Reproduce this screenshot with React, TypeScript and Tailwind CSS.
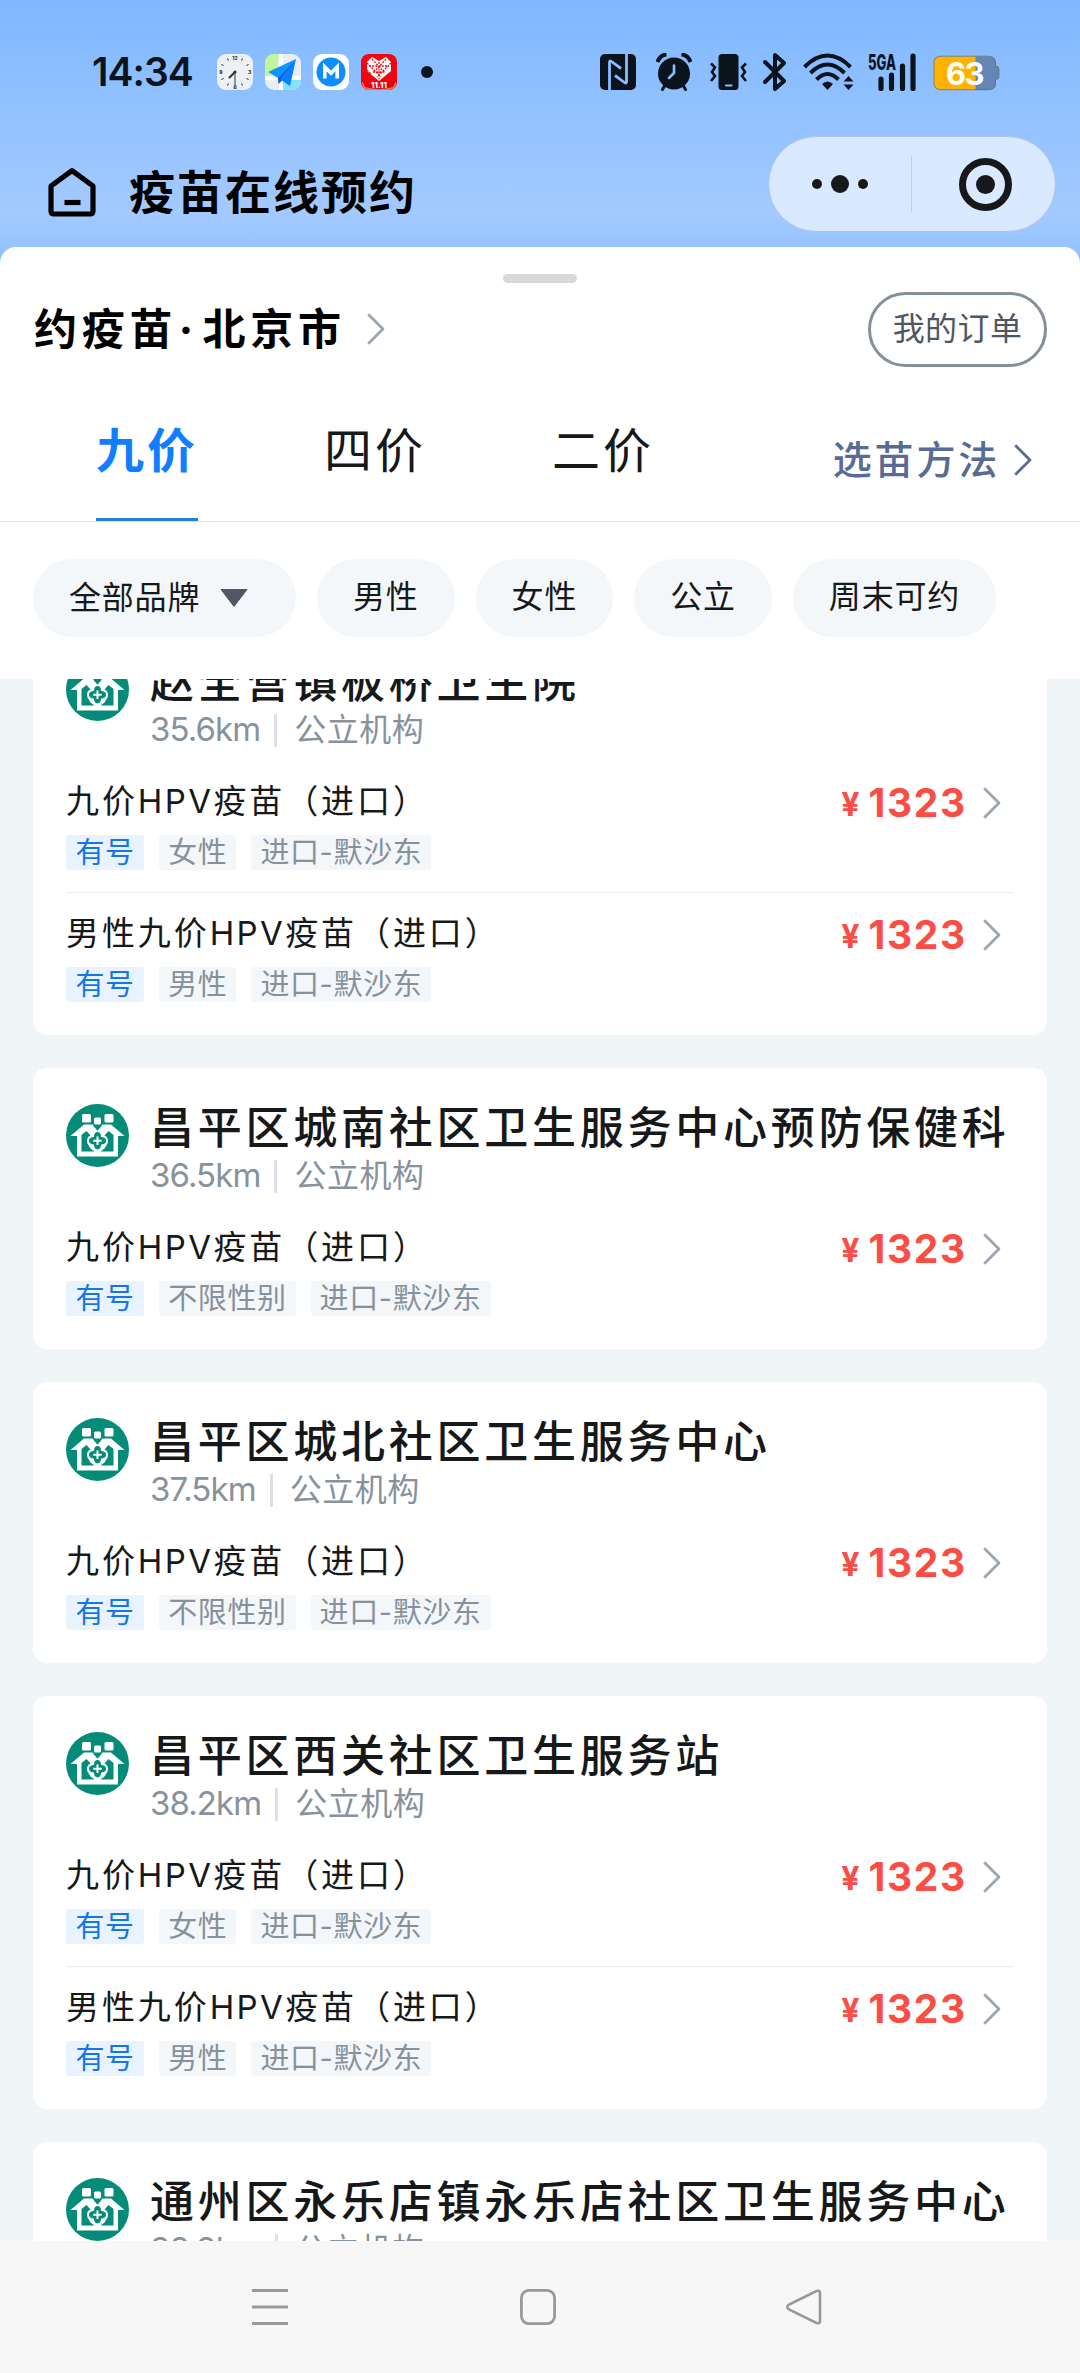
import React from 'react';

interface Vaccine {
  name: React.ReactNode;
  tags: string[];
}

interface Clinic {
  name: string;
  distance: string;
  vaccines: Vaccine[];
}

const NineValent = (
  <>
    九价<span className="tracking-[2.4px]">HPV</span>疫苗（进口）
  </>
);

const FEMALE: Vaccine = { name: NineValent, tags: ['女性', '进口-默沙东'] };
const MALE: Vaccine = { name: <>男性{NineValent}</>, tags: ['男性', '进口-默沙东'] };
const ANYONE: Vaccine = { name: NineValent, tags: ['不限性别', '进口-默沙东'] };

const CLINICS: Clinic[] = [
  { name: '赵全营镇板桥卫生院', distance: '35.6km', vaccines: [FEMALE, MALE] },
  { name: '昌平区城南社区卫生服务中心预防保健科', distance: '36.5km', vaccines: [ANYONE] },
  { name: '昌平区城北社区卫生服务中心', distance: '37.5km', vaccines: [ANYONE] },
  { name: '昌平区西关社区卫生服务站', distance: '38.2km', vaccines: [FEMALE, MALE] },
  { name: '通州区永乐店镇永乐店社区卫生服务中心', distance: '38.8km', vaccines: [ANYONE] },
];

const Chevron: React.FC<{ className: string }> = ({ className }) => (
  <svg viewBox="0 0 18 32" fill="none" stroke="currentColor" strokeWidth="2.8" className={`h-8 w-[18px] shrink-0 ${className}`}>
    <path d="M1.2 1.2 16 16 1.2 30.8" strokeLinejoin="round" />
  </svg>
);

const StatusBar = () => (
  <div className="flex h-[136px] items-start pt-[53px] text-[#0b131c]">
    <div className="ml-[92px] w-[125px] text-[39px] leading-[38px] font-semibold tracking-[-1px]">14:34</div>
    <div className="flex gap-3 pt-px">
      <svg viewBox="0 0 36 36" className="h-9 w-9">
        <rect width="36" height="36" rx="9" fill="#eef1f4" />
        <path
          d="M10.5 4.5l1 2M25.5 4.5l-1 2M4.5 10.5l2 1M31.5 10.5l-2 1M4.5 25.5l2-1M31.5 25.5l-2-1M10.5 31.5l1-2M25.5 31.5l-1-2"
          stroke="#222"
          strokeWidth="1"
        />
        <g fill="#111" fontSize="5" fontWeight="700" textAnchor="middle">
          <text x="18" y="5.8">12</text>
          <text x="32.5" y="20">3</text>
          <text x="18" y="34.8">6</text>
          <text x="3.8" y="20">9</text>
        </g>
        <path d="M18 18l-5.5 5.5" stroke="#26303c" strokeWidth="2" strokeLinecap="round" />
        <path d="M18 18v14" stroke="#6b7480" strokeWidth="1.5" />
        <circle cx="18" cy="18" r="1.5" fill="#26303c" />
      </svg>
      <svg viewBox="0 0 36 36" className="h-9 w-9">
        <defs>
          <clipPath id="map-tile">
            <rect width="36" height="36" rx="9" />
          </clipPath>
        </defs>
        <g clipPath="url(#map-tile)">
          <rect width="36" height="36" fill="#e6eff5" />
          <path d="M0 0h14L12 18 0 26z" fill="#c0f79a" />
          <path d="M18 26h18v10H18z" fill="#83e3ff" />
          <path d="M14 0h4v36h-4zM0 22h36v4H0z" fill="#fff" />
          <path d="M31 5 3 18l10 6z" fill="#0a95ff" />
          <path d="M31 5 13 24l.5 6 4-4z" fill="#0556d8" />
          <path d="M31 5 15 25l10 7z" fill="#0c7dff" />
        </g>
      </svg>
      <svg viewBox="0 0 36 36" className="h-9 w-9">
        <rect width="36" height="36" rx="9" fill="#fff" />
        <circle cx="18" cy="18" r="14.5" fill="#0d8ffb" />
        <path d="M11.800 24.500V13l6.200 6.300 6.200-6.300v11.500" fill="none" stroke="#fff" strokeWidth="3.6" />
      </svg>
      <svg viewBox="0 0 36 36" className="h-9 w-9">
        <rect width="36" height="36" rx="8" fill="#ee0713" />
        <path d="M1 28q17 10 34 0v2q-1 6-8 6H9q-7 0-8-6z" fill="#ff6d3f" />
        <path d="M1 26q17 12 34 0l-3 7q-14 4-28 0z" fill="#d90410" />
        <path d="M18 27 6 17V8l5-5 7 4 7-4 5 5v9z" fill="#fff" />
        <path
          d="M6 9l14 14M11 5l13 14M6 16l4 4M30 9 16 23M25 5 12 19M18 8v17M8 12h20M12 18h12"
          stroke="#ee0713"
          strokeWidth="1.3"
          fill="none"
          strokeDasharray="2 1.2"
        />
        <text x="18" y="34" fill="#fff" fontSize="8" fontWeight="800" textAnchor="middle" textLength="16" lengthAdjust="spacingAndGlyphs">11.11</text>
      </svg>
    </div>
    <div className="mt-[13px] ml-6 h-3 w-3 rounded-full bg-[#0b131c]" />

    <svg viewBox="0 0 36 36" className="mt-px ml-[167px] h-9 w-9">
      <rect width="36" height="36" rx="5" fill="currentColor" />
      <path d="M9.500 36V8.500q0-2.500 2-1L21 14.500M26.500 0v27.500q0 2.500-2 1L15 21.500" fill="none" stroke="#8abcff" strokeWidth="2.8" />
    </svg>
    <svg viewBox="0 0 36 38" className="ml-5 h-[38px] w-9">
      <circle cx="18" cy="20.5" r="16" fill="currentColor" />
      <path d="M1.500 9Q4 2 10.500 1.500M34.500 9Q32 2 25.500 1.500" stroke="currentColor" strokeWidth="4" fill="none" />
      <path d="M8.500 33 6.500 36.500M27.500 33l2 3.500" stroke="currentColor" strokeWidth="3" strokeLinecap="round" />
      <path d="M18 12.500V20l-5 5" stroke="#8abcff" strokeWidth="2.6" fill="none" strokeLinecap="round" />
    </svg>
    <svg viewBox="0 0 37 36" className="mt-px ml-[18px] h-9 w-[37px]">
      <rect x="8.5" width="20" height="36" rx="3.5" fill="currentColor" />
      <path d="M16 31.500h5.500" stroke="#8abcff" strokeWidth="2.2" strokeLinecap="round" />
      <path d="m1 9.500 4 4-3 4.500 3 4-4 5M36 9.500l-4 4 3 4.500-3 4 4 5" fill="none" stroke="currentColor" strokeWidth="2.6" />
    </svg>
    <svg viewBox="0 0 24 38" className="ml-4 h-[38px] w-6">
      <path d="m2 9 19 19-9 8V2l9 8L2 29" fill="none" stroke="currentColor" strokeWidth="4" strokeLinejoin="round" strokeLinecap="round" />
    </svg>
    <svg viewBox="0 0 52 38" className="ml-4 h-[38px] w-[52px]">
      <g fill="none" stroke="currentColor" strokeWidth="4">
        <path d="M1.500 14q23-23 46 0" />
        <path d="M7.500 20q17-17 34 0" />
        <path d="M13.500 26.500q11-11 22 0" />
      </g>
      <path d="M19 31q5.500-5 11 0l-5.500 6z" fill="currentColor" />
      <path d="M40.500 28.500 45.500 23l5 5.500zM40.500 31.500l5 5.500 5-5.500z" fill="currentColor" />
    </svg>
    <svg viewBox="0 0 48 38" className="ml-[13px] h-[38px] w-12 overflow-visible">
      <text x="0" y="17" fill="currentColor" fontSize="21" fontWeight="800" textLength="28" lengthAdjust="spacingAndGlyphs">5GA</text>
      <path d="M13 26v9.500M23.500 22v13.500M34.500 13v22.500M45 3v32.500" stroke="currentColor" strokeWidth="5.2" strokeLinecap="round" />
    </svg>
    <svg viewBox="0 0 67 36" className="mt-[2px] ml-[17px] h-9 w-[67px]">
      <path d="M42 1.500h14q7 0 7 7v2.500h1.500q1.500 0 1.500 3v7q0 3-1.500 3H63v4q0 7-7 7H42z" fill="#6486b5" />
      <path d="M42.500 1.500H8q-7 0-7 7v19q0 7 7 7h34.500z" fill="#ffb300" />
      <path d="M8 1.200h47.500q7 0 7 7v3l1.500.500q2 .5 2 3v7q0 2-2 2.500l-1.500.500v3q0 7-7 7H8q-7 0-7-7V8.200q0-7 7-7z" fill="none" stroke="#6b6a55" strokeOpacity=".7" strokeWidth="1" />
      <text x="31.5" y="29.5" fill="#fff" fontSize="31" fontWeight="700" textAnchor="middle" letterSpacing="-1.5">63</text>
    </svg>
  </div>
);

const TitleBar = () => (
  <div className="flex h-[111px] pr-[24px] pl-[47px]">
    <svg viewBox="0 0 50 50" className="mt-[31px] h-[50px] w-[50px]" fill="none" stroke="#000" strokeWidth="5.2">
      <path d="M25 3.600 46 19v25q0 3-3 3H7q-3 0-3-3V19z" strokeLinejoin="round" />
      <path d="M17.500 35.500h16" />
    </svg>
    <h1 className="mt-7 ml-8 text-[46px] leading-[56px] font-bold tracking-[2px] text-black">疫苗在线预约</h1>
    <div className="ml-auto flex h-[96px] w-[288px] items-center rounded-full border border-[#a9c4e8] bg-[#d9e9ff]">
      <div className="flex w-[143px] items-center justify-center gap-[9px] border-r border-[#bdd0ea] py-[19px]">
        <span className="h-[10px] w-[10px] rounded-full bg-[#16181a]" />
        <span className="h-[18px] w-[18px] rounded-full bg-[#16181a]" />
        <span className="h-[10px] w-[10px] rounded-full bg-[#16181a]" />
      </div>
      <div className="flex flex-1 justify-center pl-[3px]">
        <div className="flex h-[53px] w-[53px] items-center justify-center rounded-full border-[7px] border-[#16181a]">
          <span className="h-[19px] w-[19px] rounded-full bg-[#16181a]" />
        </div>
      </div>
    </div>
  </div>
);

const Tabs = () => (
  <div className="flex h-[122px] items-start border-b border-[#d9e2e8] pl-24">
    <div className="flex gap-[126px] text-[48px] leading-[56px] tracking-[3px] text-[#16181a]">
      <span className="h-[121px] w-[102px] border-b-[3px] border-[#2080e0] pt-[23px] font-bold text-[#117dff]">九价</span>
      <span className="w-[102px] pt-[23px]">四价</span>
      <span className="w-[102px] pt-[23px]">二价</span>
    </div>
    <div className="mt-9 ml-auto flex items-center pr-12 text-[#576b95]">
      <span className="text-[39px] leading-[48px] font-medium tracking-[2.8px]">选苗方法</span>
      <Chevron className="ml-[14px]" />
    </div>
  </div>
);

const Filters = () => (
  <div className="flex h-[157px] gap-[21px] pt-[37px] pl-[33px] text-[32px] leading-[76px] tracking-[0.8px] text-[#16181a]">
    <span className="flex h-[78px] w-[263px] items-center rounded-full bg-[#f3f7fa] pl-9">
      全部品牌
      <svg viewBox="0 0 28 18" className="ml-5 h-[18px] w-7">
        <path d="M1 .5h26L14 17.500z" fill="#505865" stroke="#505865" strokeLinejoin="round" />
      </svg>
    </span>
    <span className="h-[78px] rounded-full bg-[#f3f7fa] px-9">男性</span>
    <span className="h-[78px] rounded-full bg-[#f3f7fa] px-9">女性</span>
    <span className="h-[78px] rounded-full bg-[#f3f7fa] px-9">公立</span>
    <span className="h-[78px] rounded-full bg-[#f3f7fa] px-9">周末可约</span>
  </div>
);

const ClinicLogo = () => (
  <svg viewBox="0 0 63 63" className="h-[63px] w-[63px] shrink-0">
    <circle cx="31.5" cy="31.5" r="31.5" fill="#048c79" />
    <g fill="#fff">
      <rect x="16" y="10" width="9" height="8.5" rx="1.5" />
      <rect x="38.5" y="10" width="9" height="8.5" rx="1.5" />
      <rect x="28" y="13.5" width="7" height="7" rx="1.5" />
      <path d="M18 20.500h8.500l5 5 5-5H45L58.500 32h-6.500v20.500H11V32H4.500z" />
    </g>
    <path d="M15.500 47.500V31l5-4 5 5.500v3l-4 4 3 5 4 3zM47.500 47.500V31l-5-4-5 5.500v3l4 4-3 5-4 3z" fill="#048c79" />
    <path d="M31.500 27q4 0 4.500 5 5 .5 5 4.700t-5 4.700q-.5 5-4.500 5t-4.500-5q-5-.5-5-4.700t5-4.700q.5-5 4.500-5z" fill="#048c79" stroke="#fff" strokeWidth="2" />
    <path d="M31.500 32.500v8.500M27.300 36.700h8.400" stroke="#fff" strokeWidth="2" />
    <path d="M28 21.500l3.500 4 3.500-4" stroke="#048c79" strokeWidth="1.5" fill="none" />
  </svg>
);

const VaccineRow: React.FC<{ vaccine: Vaccine; divided: boolean }> = ({ vaccine, divided }) => (
  <div className={`flex h-[132px] justify-between border-t ${divided ? 'border-[#e9eef1]' : 'border-transparent'}`}>
    <div>
      <div className="mt-4 h-[58px] text-[33px] leading-[48px] tracking-[2.9px] text-[#16181a]">{vaccine.name}</div>
      <div className="flex gap-[15px] text-[29px] leading-[35px] tracking-[0.6px]">
        <span className="rounded-[3px] bg-[#e9f3ff] px-[9.5px] text-[#1577e6]">有号</span>
        {vaccine.tags.map(tag => (
          <span key={tag} className="rounded-[3px] bg-[#f3f7fa] px-[9px] text-[#87919c]">{tag}</span>
        ))}
      </div>
    </div>
    <div className="mt-4 mr-[13px] flex h-[52px] items-center font-bold text-[#f94d46]">
      <span className="mr-[9px] pt-1 text-[32px]">¥</span>
      <span className="text-[39px] tracking-[1.7px]">1323</span>
      <Chevron className="ml-[16px] text-[#9ba6b2]" />
    </div>
  </div>
);

const ClinicCard: React.FC<{ clinic: Clinic }> = ({ clinic }) => (
  <div className="rounded-[14px] bg-white px-[33px] pb-[11px]">
    <div className="flex h-[138px] pt-9">
      <ClinicLogo />
      <div className="ml-[21px]">
        <h2 className="h-[49px] text-[44px] leading-[48px] font-medium tracking-[3.75px] whitespace-nowrap text-[#16181a]">{clinic.name}</h2>
        <div className="flex h-[46px] items-center text-[32px] text-[#87929d]">
          <span className="text-[33px] tracking-[-0.9px]">{clinic.distance}</span>
          <span className="mr-[17px] ml-[14px] h-[33px] w-[3px] bg-[#dbe1e6]" />
          <span className="tracking-[0.5px]">公立机构</span>
        </div>
      </div>
    </div>
    {clinic.vaccines.map((vaccine, index) => (
      <VaccineRow key={index} vaccine={vaccine} divided={index > 0} />
    ))}
  </div>
);

const NavBar = () => (
  <div className="flex h-[132px] items-start bg-[#f7f7f7] pt-12 text-[#999]">
    <svg viewBox="0 0 36 36" className="ml-[252px] h-9 w-9" stroke="currentColor" strokeWidth="3">
      <path d="M0 1.500h36M0 18h36M0 34.500h36" />
    </svg>
    <svg viewBox="0 0 36 36" className="ml-[232px] h-9 w-9" fill="none" stroke="currentColor" strokeWidth="2.8">
      <rect x="1.4" y="1.4" width="33.2" height="33.2" rx="7.5" />
    </svg>
    <svg viewBox="0 0 36 36" className="ml-[230px] h-9 w-9" fill="none" stroke="currentColor" strokeWidth="2.6">
      <path d="M30.500 2 3 15.500q-3.500 2.500 0 5L30.500 34q3.500 1 3.500-2V4q0-3-3.500-2z" />
    </svg>
  </div>
);

export default function App() {
  return (
    <div className="flex h-[2373px] w-[1080px] flex-col overflow-hidden bg-[#f0f5f8] font-['Inter','Noto_Sans_CJK_SC',sans-serif]">
      <div className="bg-linear-to-b from-[#7fb8ff] via-[#a3caff] via-80% to-[#8fbfff] pb-5">
        <StatusBar />
        <TitleBar />
      </div>
      <div className="-mt-5 rounded-t-[16px] bg-white">
        <div className="mx-auto h-9 w-[74px] pt-[27px]">
          <div className="h-[9px] rounded-full bg-[#d8d8d8]" />
        </div>
        <div className="flex h-[117px] pr-[33px] pl-[34px]">
          <div className="mt-5 flex h-[52px] items-center text-[43px] leading-[52px] font-bold tracking-[4.8px] text-black">
            约疫苗<span className="mr-1 -ml-1 w-[25px] text-center tracking-normal">·</span>北京市
            <Chevron className="ml-[21px] text-[#9ba6b2]" />
          </div>
          <button className="mt-[9px] ml-auto h-[75px] w-[179px] rounded-full border-[3px] border-[#858f99] pb-0.5 text-[32px] tracking-[0.4px] text-[#4f5762]">
            我的订单
          </button>
        </div>
        <Tabs />
        <Filters />
      </div>
      <div className="flex-1 overflow-hidden px-[33px]">
        <div className="-mt-[57px] flex flex-col gap-[33px]">
          {CLINICS.map(clinic => (
            <ClinicCard key={clinic.name} clinic={clinic} />
          ))}
        </div>
      </div>
      <NavBar />
    </div>
  );
}
